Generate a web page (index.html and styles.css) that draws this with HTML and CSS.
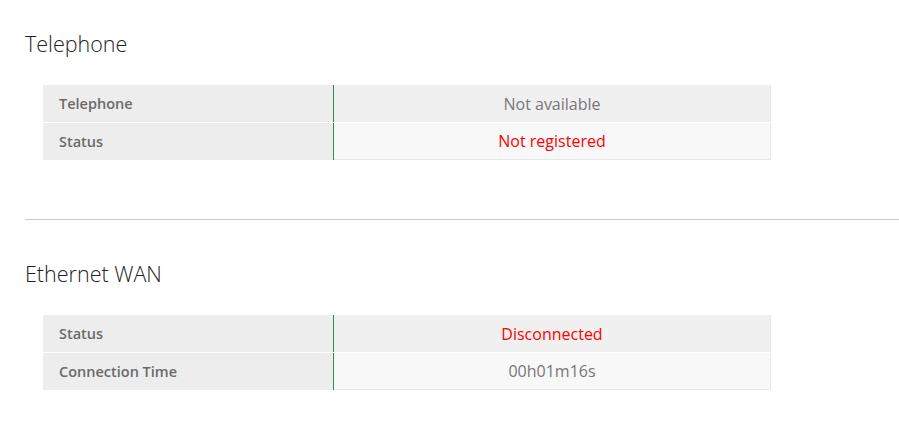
FILE: index.html
```html
<!DOCTYPE html>
<html>
<head>
<meta charset="utf-8">
<link rel="stylesheet" href="styles.css">
</head>
<body>
<section class="section">
  <h2 class="title">Telephone</h2>
  <div class="table">
    <div class="row">
      <div class="label">Telephone</div>
      <div class="value">Not available</div>
    </div>
    <div class="row alt">
      <div class="label">Status</div>
      <div class="value red">Not registered</div>
    </div>
  </div>
</section>
<hr class="divider">
<section class="section second">
  <h2 class="title">Ethernet WAN</h2>
  <div class="table">
    <div class="row">
      <div class="label">Status</div>
      <div class="value red">Disconnected</div>
    </div>
    <div class="row alt">
      <div class="label">Connection Time</div>
      <div class="value">00h01m16s</div>
    </div>
  </div>
</section>
</body>
</html>
```
FILE: styles.css
```css
html, body {
  margin: 0;
  padding: 0;
  background: #fff;
  font-family: "Open Sans", "Liberation Sans", sans-serif;
}
.section {
  padding: 30px 0 0 25px;
}
.second {
  padding-top: 40px;
}
.title {
  margin: 0;
  font-size: 21.5px;
  font-weight: 300;
  color: #222;
  line-height: 28px;
  letter-spacing: 0;
}
.table {
  margin: 27px 0 0 18px;
  width: 728px;
  display: flex;
  flex-direction: column;
  gap: 1px;
}
.row {
  display: grid;
  grid-template-columns: 290px 1px 1fr;
  height: 37px;
}
.row::before {
  content: "";
  grid-column: 2;
  grid-row: 1;
  background: #2e8b57;
}
.label {
  grid-column: 1;
  grid-row: 1;
  background: #ededed;
  color: #6a6a6a;
  font-size: 14.5px;
  font-weight: 600;
  padding-left: 16px;
  display: flex;
  align-items: center;
}
.value {
  grid-column: 3;
  grid-row: 1;
  background: #f0f0f0;
  color: #777;
  font-size: 16px;
  display: flex;
  align-items: center;
  justify-content: center;
  border-right: 1px solid #e8e8e8;
}
.alt .value {
  background: #f8f8f8;
  border-bottom: 1px solid #e8e8e8;
}
.red {
  color: #ff0000;
}
.divider {
  margin: 59px 0 0 25px;
  border: 0;
  border-top: 1px solid #c8c8c8;
  height: 0;
}
```
